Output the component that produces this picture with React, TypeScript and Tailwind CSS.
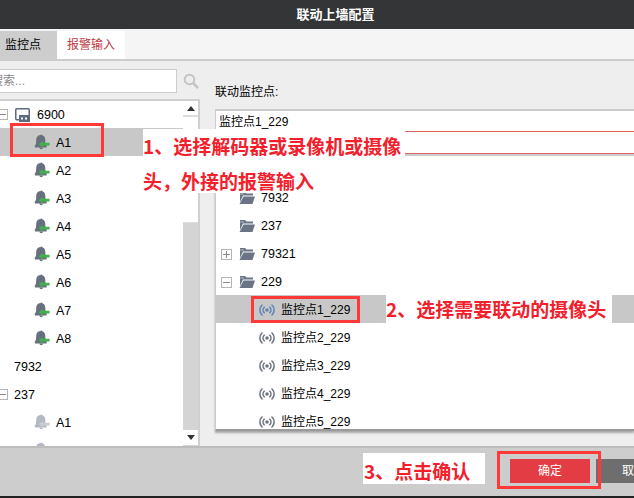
import React from 'react'

const font = "font-['Liberation_Sans','Noto_Sans_CJK_SC',sans-serif]"
const markFont = "font-['Noto_Sans_CJK_SC',sans-serif] font-bold text-[19px] text-[#f3202c]"

function Bell({ off }: { off?: boolean }) {
  const body = off ? '#b4b8c0' : '#67707f'
  const arrow = off ? '#c9ccd2' : '#44b04e'
  return (
    <svg width="16" height="16" viewBox="0 0 16 16" className="shrink-0">
      <path d="M6.200 1.200c.4-1 1.800-1 2.200 0 2 .7 2.800 2.400 2.900 4.500l.1 3c.1 1.400.7 2.300 1.500 3l-.5 1.800H1.100l-.5-1.800c.8-.7 1.400-1.600 1.500-3l.1-3c.1-2.100 1-3.800 2.900-4.500z" fill={body} />
      <path d="M5.400 13.500h3.600a1.800 1.800 0 0 1-3.600 0z" fill={body} />
      <path d="M4.800 10.200l3.800-3.400v2h7v2.800h-7v2z" fill={arrow} />
    </svg>
  )
}

function Folder() {
  return (
    <svg width="16" height="14" viewBox="0 0 16 14" className="shrink-0">
      <path d="M1 1h5l1.500 1.500H14v2H4L1 11z" fill="#6b7484" />
      <path d="M4.500 5.500H16L13.500 13H.5z" fill="#6b7484" />
      <path d="M1 2.500h4v1H1z" fill="#fff" opacity="0.5" />
    </svg>
  )
}

function Signal({ active }: { active?: boolean }) {
  const c = active ? '#5f86b4' : '#6f7684'
  return (
    <svg width="16" height="12" viewBox="0 0 16 12" fill="none" stroke={c} strokeWidth="1.600" strokeLinecap="round" className="shrink-0">
      <circle cx="8" cy="6" r="1.800" fill={c} stroke="none" />
      <path d="M5.200 3.200a4 4 0 0 0 0 5.600M10.800 3.200a4 4 0 0 1 0 5.600" />
      <path d="M3 1a7 7 0 0 0 0 10M13 1a7 7 0 0 1 0 10" />
    </svg>
  )
}

function Device() {
  return (
    <svg width="15" height="14" viewBox="0 0 15 14" className="shrink-0">
      <rect x="0.750" y="0.750" width="13.500" height="11" rx="1" fill="none" stroke="#5d6a80" strokeWidth="1.500" />
      <rect x="4" y="7" width="11" height="7" fill="#5d6a80" />
      <rect x="6" y="9.500" width="2" height="2" fill="#fff" />
      <rect x="10" y="9.500" width="2" height="2" fill="#fff" />
    </svg>
  )
}

function Toggle({ open }: { open?: boolean }) {
  return (
    <span className="relative block w-[11px] h-[11px] border border-[#b4b4b4] bg-white shrink-0">
      <span className="absolute left-[1px] right-[1px] top-[4px] h-px bg-[#8a8a8a]" />
      {!open && <span className="absolute top-[1px] bottom-[1px] left-[4px] w-px bg-[#8a8a8a]" />}
    </span>
  )
}

const alarms = ['A2', 'A3', 'A4', 'A5', 'A6', 'A7', 'A8']
const points = ['监控点2_229', '监控点3_229', '监控点4_229', '监控点5_229']

export default function App() {
  return (
    <div className={`relative w-[634px] h-[498px] overflow-hidden flex flex-col bg-[#eeeeee] text-[12.500px] text-black ${font}`}>
      <div className="h-[29px] shrink-0 bg-[#333537] flex items-center justify-center pl-[37px] text-white font-bold text-[13px]">
        联动上墙配置
      </div>

      <div className="h-[32px] shrink-0 pt-[2px] bg-[#f5f5f5] border-b-2 border-[#cccccc] flex text-[12px]">
        <div className="w-[57px] bg-[#cdcdcd] pl-[5px] flex items-center">监控点</div>
        <div className="w-[68px] bg-white text-[#c0393f] flex items-center justify-center">报警输入</div>
      </div>

      <div className="flex-1 min-h-0 flex">
        <div className="w-[215px] shrink-0 flex flex-col min-h-0">
          <div className="flex items-center h-[38px] pt-[2px] shrink-0">
            <div className="-ml-[2px] w-[179px] h-[24px] bg-white border border-[#cccccc] text-[12px] text-[#8a8a8a] flex items-center overflow-hidden">
              <span className="-ml-[8px] shrink-0">搜索...</span>
            </div>
            <svg width="16" height="16" viewBox="0 0 16 16" fill="none" className="ml-[6px]">
              <circle cx="6.500" cy="6.500" r="4.800" stroke="#c4c4c4" strokeWidth="2" />
              <path d="M10 10l5 5" stroke="#c4c4c4" strokeWidth="2.500" />
            </svg>
          </div>

          <div className="w-[200px] flex-1 min-h-0 border-t-2 border-r-2 border-[#d0d0d0] bg-white flex overflow-hidden">
            <div className="w-[183px] shrink-0 overflow-hidden">
              <div className="h-[27px] flex items-center -ml-[3px]">
                <Toggle open />
                <span className="ml-[7px]"><Device /></span>
                <span className="ml-[7px] pt-[2px]">6900</span>
              </div>
              <div className="h-[28px] flex items-center bg-[#c8c8c8] pl-[34px]">
                <Bell />
                <span className="ml-[6px] pt-[2px]">A1</span>
              </div>
              {alarms.map((name) => (
                <div key={name} className="h-[28px] flex items-center pl-[34px]">
                  <Bell />
                  <span className="ml-[6px] pt-[2px]">{name}</span>
                </div>
              ))}
              <div className="h-[28px] flex items-center pl-[14px] pt-[2px]">7932</div>
              <div className="h-[28px] flex items-center -ml-[3px]">
                <Toggle open />
                <span className="ml-[6px] pt-[2px]">237</span>
              </div>
              <div className="h-[28px] flex items-center pl-[34px]">
                <Bell off />
                <span className="ml-[6px] pt-[2px]">A1</span>
              </div>
              <div className="h-[28px] flex items-center pl-[34px]">
                <Bell off />
                <span className="ml-[6px] pt-[2px]">A2</span>
              </div>
            </div>
            <div className="w-[15px] shrink-0 flex flex-col bg-[#d4d4d4]">
              <div className="h-[16px] shrink-0 bg-white border-b-2 border-[#dddddd] flex items-center justify-center">
                <span className="w-0 h-0 border-x-[4px] border-x-transparent border-b-[5px] border-b-[#333333]" />
              </div>
              <div className="h-[106px] shrink-0 bg-white border-b border-[#dddddd]" />
              <div className="flex-1" />
              <div className="h-[15px] shrink-0 bg-white flex items-center justify-center">
                <span className="w-0 h-0 border-x-[4px] border-x-transparent border-t-[5px] border-t-[#333333]" />
              </div>
              <div className="h-[1px] shrink-0" />
            </div>
            <div className="w-[2px] shrink-0 bg-[#d4d4d4]" />
          </div>
        </div>

        <div className="flex-1 min-w-0 flex flex-col">
          <div className="h-[48px] shrink-0 pt-[23px] text-[12px] leading-[16px]">联动监控点:</div>
          <div className="h-[45px] shrink-0 bg-white border-t-2 border-l border-[#cccccc] pl-[3px] pt-[2px] text-[12px] leading-[18px]">监控点1_229</div>
          <div className="h-[277px] shrink-0 bg-white border-y-2 border-l border-t-[#cccccc] border-b-[#9a9a9a] border-l-[#cccccc] overflow-hidden text-[12px] shadow-[0_2px_2px_rgba(0,0,0,0.3)]">
            <div className="h-[27px]" />
            <div className="h-[28px] flex items-center pl-[23px] pt-[2px]"><Folder /><span className="ml-[6px] text-[12.500px]">7932</span></div>
            <div className="h-[28px] flex items-center pl-[23px] pt-[2px]"><Folder /><span className="ml-[6px] text-[12.500px]">237</span></div>
            <div className="h-[28px] flex items-center pl-[5px] pt-[2px]"><Toggle /><span className="ml-[7px]"><Folder /></span><span className="ml-[6px] text-[12.500px]">79321</span></div>
            <div className="h-[28px] flex items-center pl-[5px] pt-[2px]"><Toggle open /><span className="ml-[7px]"><Folder /></span><span className="ml-[6px] text-[12.500px]">229</span></div>
            <div className="h-[28px] flex items-center pl-[43px] pt-[2px] bg-[#c8c8c8]"><Signal active /><span className="ml-[6px]">监控点1_229</span></div>
            {points.map((p) => (
              <div key={p} className="h-[28px] flex items-center pl-[43px] pt-[2px]"><Signal /><span className="ml-[6px]">{p}</span></div>
            ))}
          </div>
        </div>
      </div>

      <div className="h-[52px] shrink-0 bg-[#cdcdcd] border-t-2 border-b-2 border-t-[#bdbdbd] border-b-[#222222] flex items-center pl-[510px] pb-[2px]">
        <button className="w-[80px] h-[24px] shrink-0 bg-[#e33c44] text-white text-[12px]">确定</button>
        <button className="ml-[6px] w-[60px] h-[24px] bg-[#6e6e6e] text-white text-[12px] shrink-0 text-left pl-[26px]">取消</button>
      </div>

      {/* annotations pasted on top of the screenshot */}
      <div className="absolute left-[10px] top-[123px] w-[94px] h-[34px] border-[3px] border-[#ff3838]" />
      <div className={`absolute left-[143px] top-[129px] w-[262px] h-[64px] bg-white ${markFont}`}>
        <div className="h-[34px] leading-[34px] whitespace-nowrap">1、选择解码器或录像机或摄像</div>
        <div className="h-[30px] leading-[36px] whitespace-nowrap">头，外接的报警输入</div>
      </div>
      <div className="absolute left-[405px] right-0 top-[131px] h-px bg-[#e06666]" />
      <div className="absolute left-[405px] right-0 top-[153px] h-px bg-[#e06666]" />
      <div className="absolute left-[251px] top-[296px] w-[109px] h-[27px] border-[3px] border-[#ff3838]" />
      <div className={`absolute left-[386px] top-[295px] w-[226px] h-[28px] bg-white leading-[28px] whitespace-nowrap ${markFont}`}>2、选择需要联动的摄像头</div>
      <div className={`absolute left-[363px] top-[453px] w-[122px] h-[31px] bg-white leading-[35px] pl-[1px] whitespace-nowrap ${markFont}`}>3、点击确认</div>
      <div className="absolute left-[497px] top-[451px] w-[104px] h-[38px] border-[3px] border-[#ff3838]" />
    </div>
  )
}
